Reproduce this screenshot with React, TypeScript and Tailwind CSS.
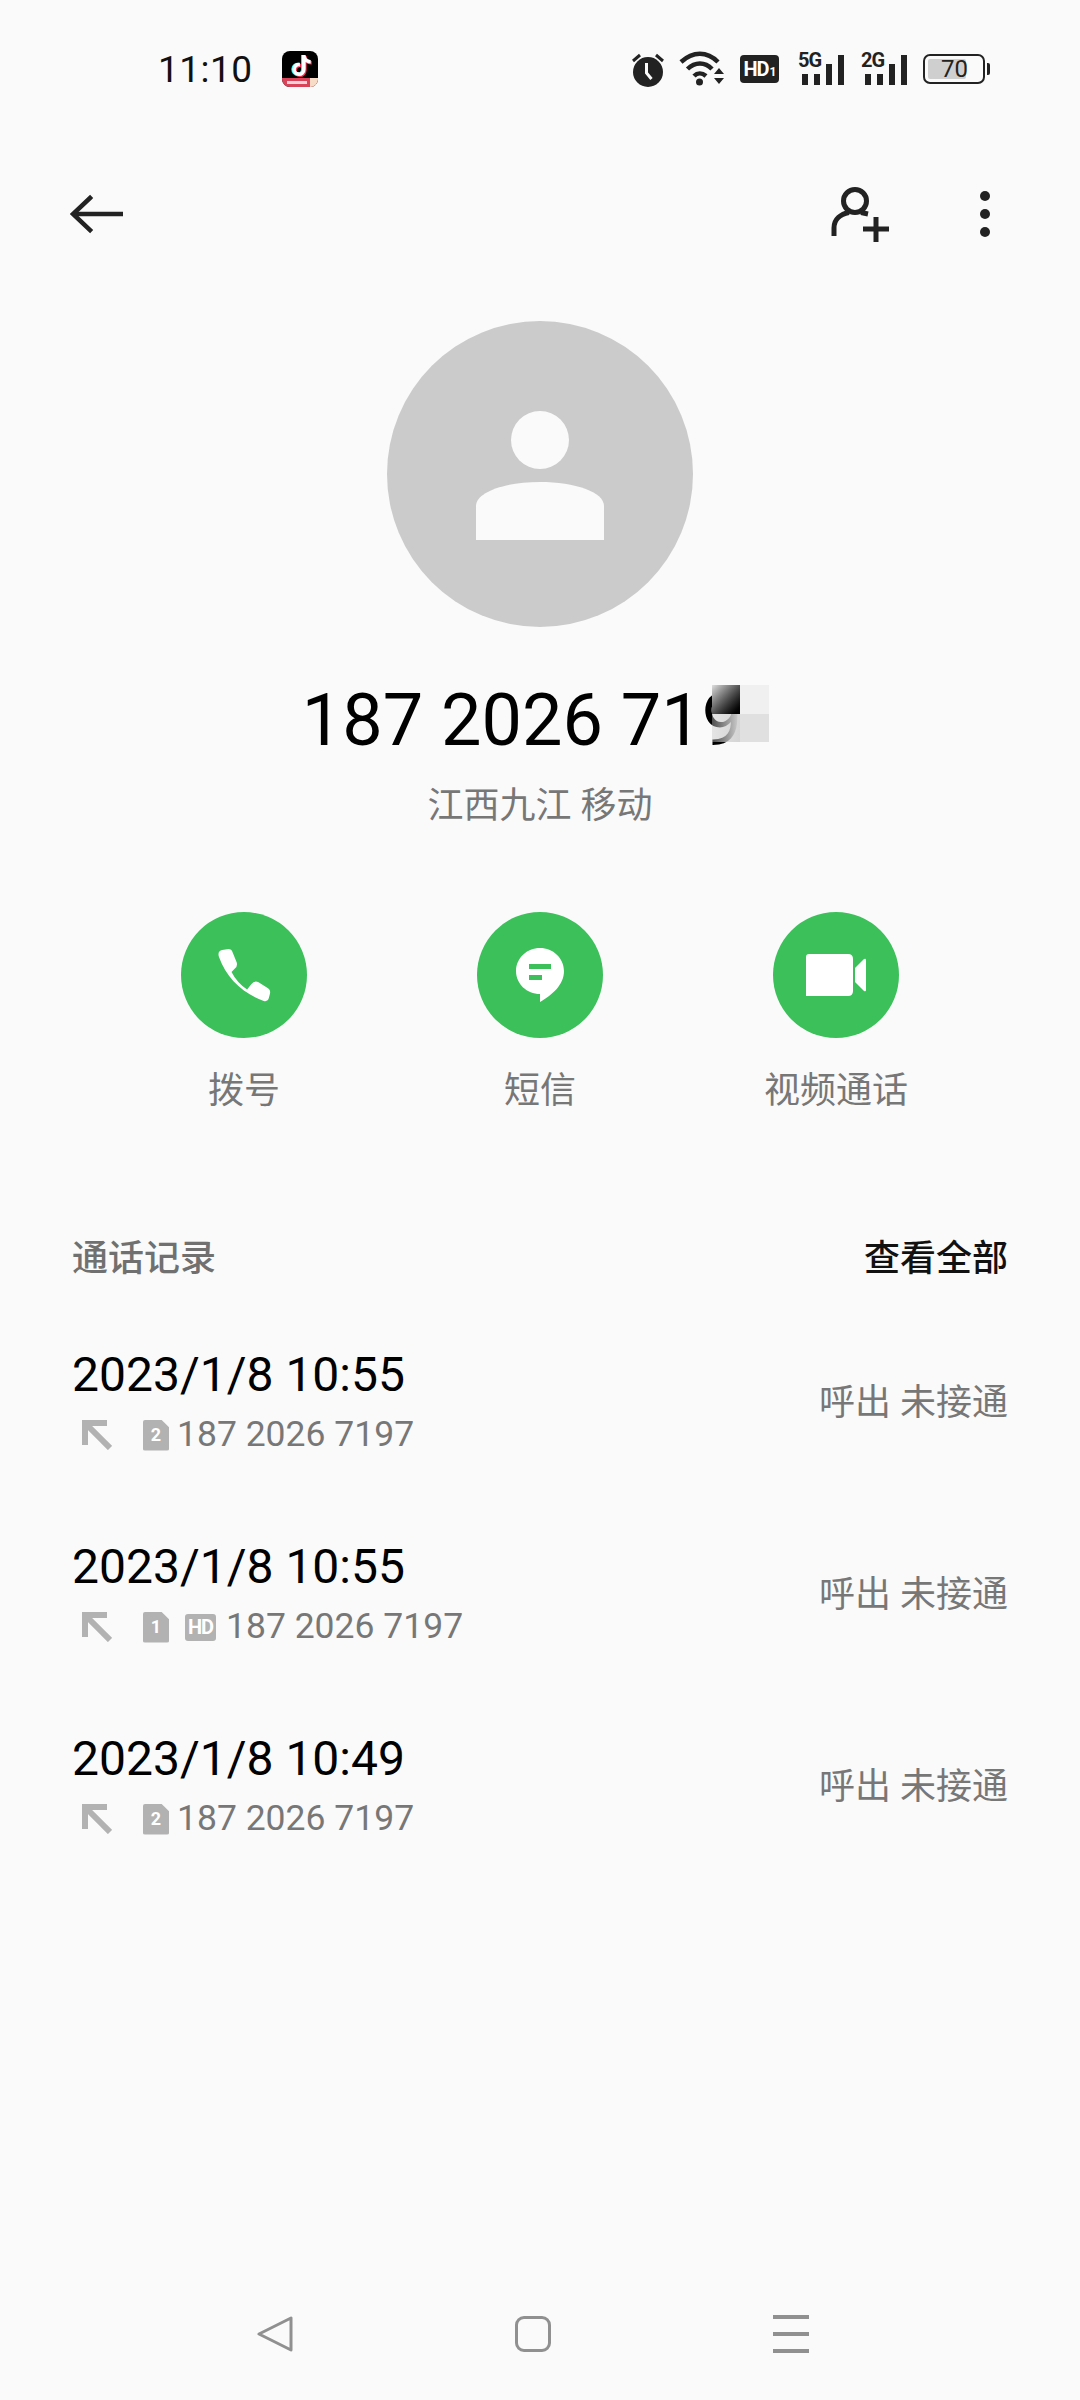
import { FaTiktok } from 'react-icons/fa';

const font = { fontFamily: 'Roboto, "Noto Sans CJK SC", sans-serif' };

function AlarmIcon() {
  return (
    <svg width="34" height="36" viewBox="0 0 34 36">
      <circle cx="17" cy="21" r="15" fill="#222" />
      <path d="M15.5 12v10l5 6" stroke="#fafafa" strokeWidth="3" fill="none" />
      <path d="M2 10l7-6M32 10l-7-6" stroke="#222" strokeWidth="3" />
    </svg>
  );
}

function WifiIcon() {
  return (
    <svg width="46" height="36" viewBox="0 0 46 36">
      <path d="M2 11C14 0 28 0 39 11" stroke="#222" strokeWidth="4.5" fill="none" />
      <path d="M8.500 18C16 10.500 26 10.500 33 18" stroke="#222" strokeWidth="4.500" fill="none" />
      <path d="M15 25C18.500 21.500 23 21.500 27 25" stroke="#222" strokeWidth="4.500" fill="none" />
      <circle cx="20.500" cy="31" r="3.500" fill="#222" />
      <path d="M35 23h10l-5-6zM35 27h10l-5 6z" fill="#222" />
    </svg>
  );
}

function SignalIcon({ label }: { label: string }) {
  return (
    <div className="relative w-[46px] h-[32px]">
      <span className="absolute left-0 top-[-3px] text-[20px] leading-[20px] font-bold text-[#222] tracking-[-1px]">{label}</span>
      <div className="absolute inset-0 flex items-end justify-end gap-[6px]">
        <div className="w-[6px] h-[11px] bg-[#222]" />
        <div className="w-[6px] h-[11px] bg-[#222]" />
        <div className="w-[6px] h-[21px] bg-[#222]" />
        <div className="w-[6px] h-[30px] bg-[#222]" />
      </div>
    </div>
  );
}

function Battery() {
  return (
    <div className="flex items-center gap-[2px]">
      <div className="relative w-[62px] h-[30px] border-[2px] border-[#222] rounded-[7px]">
        <div className="absolute left-[3px] top-[3px] bottom-[3px] w-[38px] bg-[#cfcfcf] rounded-[2px]" />
        <span className="absolute left-[16px] top-0 bottom-0 flex items-center text-[24px] leading-none text-[#222]">70</span>
      </div>
      <div className="w-[3px] h-[12px] bg-[#222] rounded-r-[2px]" />
    </div>
  );
}

function AppBadge() {
  return (
    <div className="relative w-[36px] h-[36px] rounded-[8px] bg-black overflow-hidden ml-[29px]">
      <FaTiktok className="absolute left-[9px] top-[4px] w-[19px] h-[21px] text-[#25f4ee]" />
      <FaTiktok className="absolute left-[11px] top-[5px] w-[19px] h-[21px] text-[#fe2c55]" />
      <FaTiktok className="absolute left-[10px] top-[4px] w-[19px] h-[21px] text-white" />
      <div className="absolute left-0 right-0 bottom-0 h-[9px] bg-[#d8435a] flex items-center pl-[5px]">
        <div className="w-[20px] h-[3px] bg-[#f8d0d6]" />
      </div>
      <div className="absolute right-0 bottom-0 w-[8px] h-[9px] bg-[#f8dcc8]" />
    </div>
  );
}

function StatusBar() {
  return (
    <div className="h-[138px] flex items-center pl-[158px] pr-[90px] shrink-0">
      <span className="text-[37px] leading-none text-[#111] tracking-[0.5px]">11:10</span>
      <AppBadge />
      <div className="ml-auto flex items-center">
        <AlarmIcon />
        <div className="ml-[14px]"><WifiIcon /></div>
        <div className="ml-[15px] w-[39px] h-[28px] rounded-[4px] bg-[#222] flex items-center justify-center text-white font-bold text-[20px] leading-none tracking-[-1px]">
          HD<span className="text-[12px] mt-[5px] ml-[1px]">1</span>
        </div>
        <div className="ml-[19px]"><SignalIcon label="5G" /></div>
        <div className="ml-[17px]"><SignalIcon label="2G" /></div>
        <div className="ml-[16px]"><Battery /></div>
      </div>
    </div>
  );
}

function Header() {
  return (
    <div className="h-[152px] flex items-center pl-[70px] pr-[90px] shrink-0">
      <svg width="54" height="40" viewBox="0 0 54 40" fill="none" stroke="#222" strokeWidth="4.500" strokeLinecap="square">
        <path d="M53 20H4" strokeLinecap="butt" />
        <path d="M20 4L3 20l17 16" />
      </svg>
      <div className="ml-auto flex items-center">
        <svg width="60" height="56" viewBox="0 0 60 56" fill="none" stroke="#222" strokeWidth="5">
          <circle cx="24" cy="15" r="11.500" />
          <path d="M3 50V42C3 33 10 28 18 26.500M30 26.500L37 28" />
          <path d="M32 43H58M45 31V56" />
        </svg>
        <div className="ml-[89px] flex flex-col gap-[8px] w-[10px]">
          <div className="w-[10px] h-[10px] rounded-full bg-[#222]" />
          <div className="w-[10px] h-[10px] rounded-full bg-[#222]" />
          <div className="w-[10px] h-[10px] rounded-full bg-[#222]" />
        </div>
      </div>
    </div>
  );
}

function Avatar() {
  return (
    <div className="mt-[31px] mx-auto w-[306px] h-[306px] rounded-full bg-[#cbcbcb] flex items-center justify-center shrink-0">
      <svg width="130" height="130" viewBox="0 0 130 130" fill="#fafafa" className="mt-[2px]">
        <circle cx="65" cy="30" r="29" />
        <path d="M1 130V96C1 82 30 72 65 72s64 10 64 24v34z" />
      </svg>
    </div>
  );
}

function NumberTitle() {
  return (
    <div className="mt-[52px] h-[84px] flex justify-center">
      <div className="relative pr-[36px] text-[72px] leading-[84px] text-black">
        187 2026 719
        {/* mosaic over the last digits */}
        <div className="absolute left-[410px] top-[6px] w-[57px] h-[57px] grid grid-cols-2 grid-rows-2">
          <div className="bg-gradient-to-br from-[#e0e0e0] via-[#555] to-black" />
          <div className="bg-[#f0f0f0]" />
          <div className="bg-gradient-to-r from-[#c4c4c4]/40 to-[#d4d4d4]" />
          <div className="bg-[#e0e0e0]" />
        </div>
      </div>
    </div>
  );
}

function PhoneGlyph() {
  return (
    <svg width="54" height="54" viewBox="0 0 52 52" fill="white">
      <path d="M2 9Q0 3 5 2L11 1Q14 1 15 4L19 14Q20 18 17 20L14 23Q19 33 29 40L33 35Q36 31 40 33L48 38Q52 40 51 44L50 48Q49 52 45 51C25 44 9 29 2 9Z" />
    </svg>
  );
}

function MessageGlyph() {
  return (
    <svg width="48" height="54" viewBox="0 0 48 54">
      <path d="M24 0C37 0 48 10 48 23C48 37 36 47 24 54V46C11 46 0 36 0 23C0 10 11 0 24 0Z" fill="white" />
      <rect x="13" y="16" width="22" height="5" fill="#3bc05a" />
      <rect x="13" y="27" width="13" height="5" fill="#3bc05a" />
    </svg>
  );
}

function VideoGlyph() {
  return (
    <svg width="60" height="42" viewBox="0 0 60 42" fill="white">
      <path d="M3 0H42Q47 0 47 5V37Q47 42 42 42H0V3Q0 0 3 0Z" />
      <path d="M49 14L58 5Q60 4 60 6V36Q60 38 58 37L49 28Z" />
    </svg>
  );
}

function Actions() {
  const items = [
    { label: '拨号', icon: <PhoneGlyph /> },
    { label: '短信', icon: <MessageGlyph /> },
    { label: '视频通话', icon: <VideoGlyph /> },
  ];
  return (
    <div className="mt-[81px] mx-auto grid grid-cols-[296px_296px_296px]">
      {items.map((item) => (
        <div key={item.label} className="flex flex-col items-center">
          <div className="w-[126px] h-[126px] rounded-full bg-[#3bc05a] flex items-center justify-center">{item.icon}</div>
          <div className="mt-[28px] h-[50px] leading-[50px] text-[36px] text-[#777]">{item.label}</div>
        </div>
      ))}
    </div>
  );
}

function OutgoingArrow() {
  return (
    <svg width="30" height="30" viewBox="0 0 30 30" fill="none" stroke="#b2b2b2" strokeWidth="6" className="ml-[10px]">
      <path d="M28 28L4 4" />
      <path d="M3 25V3H25" />
    </svg>
  );
}

function SimBadge({ slot }: { slot: string }) {
  return (
    <div className="relative w-[26px] h-[31px] ml-[31px] bg-[#b2b2b2] rounded-[2px] [clip-path:polygon(0_0,70%_0,100%_25%,100%_100%,0_100%)] flex items-center justify-center text-white text-[18px] font-bold leading-none">
      {slot}
    </div>
  );
}

function CallRow({ time, slot, hd }: { time: string; slot: string; hd?: boolean }) {
  return (
    <div className="h-[116px] pl-[72px] pr-[72px] flex items-center justify-between">
      <div className="flex flex-col">
        <div className="h-[60px] leading-[60px] text-[48px] text-black">{time}</div>
        <div className="mt-[8px] h-[44px] flex items-center">
          <OutgoingArrow />
          <SimBadge slot={slot} />
          {hd && (
            <div className="ml-[16px] w-[31px] h-[27px] rounded-[3px] bg-[#b2b2b2] flex items-center justify-center text-white text-[20px] font-bold leading-none tracking-[-1px]">
              HD
            </div>
          )}
          <span className={hd ? 'ml-[10px] text-[35.5px] text-[#777]' : 'ml-[8px] text-[35.5px] text-[#777]'}>187 2026 7197</span>
        </div>
      </div>
      <div className="mt-[4px] text-[36px] text-[#777]">呼出 未接通</div>
    </div>
  );
}

function CallLog() {
  return (
    <div>
      <div className="mt-[118px] h-[50px] px-[72px] flex items-center justify-between text-[36px] font-medium">
        <span className="text-[#707070]">通话记录</span>
        <span className="text-[#111]">查看全部</span>
      </div>
      <div className="mt-[59px] flex flex-col gap-[76px]">
        <CallRow time="2023/1/8 10:55" slot="2" />
        <CallRow time="2023/1/8 10:55" slot="1" hd />
        <CallRow time="2023/1/8 10:49" slot="2" />
      </div>
    </div>
  );
}

function NavBar() {
  return (
    <div className="mt-auto h-[133px] pl-[146px] flex shrink-0">
      <div className="w-[258px] flex items-center justify-center">
        <svg width="36" height="36" viewBox="0 0 36 36" fill="none" stroke="#909090" strokeWidth="3" strokeLinejoin="round">
          <path d="M2 18L34 2V34Z" />
        </svg>
      </div>
      <div className="w-[258px] flex items-center justify-center">
        <div className="w-[36px] h-[36px] rounded-[9px] border-[3px] border-[#909090]" />
      </div>
      <div className="w-[258px] flex flex-col items-center justify-center gap-[13px]">
        <div className="w-[36px] h-[4px] bg-[#909090]" />
        <div className="w-[36px] h-[4px] bg-[#909090]" />
        <div className="w-[36px] h-[4px] bg-[#909090]" />
      </div>
    </div>
  );
}

export default function App() {
  return (
    <div className="w-[1080px] h-[2400px] bg-[#fafafa] flex flex-col overflow-hidden" style={font}>
      <StatusBar />
      <Header />
      <Avatar />
      <NumberTitle />
      <div className="mt-[18px] h-[50px] leading-[50px] text-center text-[36px] text-[#777]">江西九江 移动</div>
      <Actions />
      <CallLog />
      <NavBar />
    </div>
  );
}
